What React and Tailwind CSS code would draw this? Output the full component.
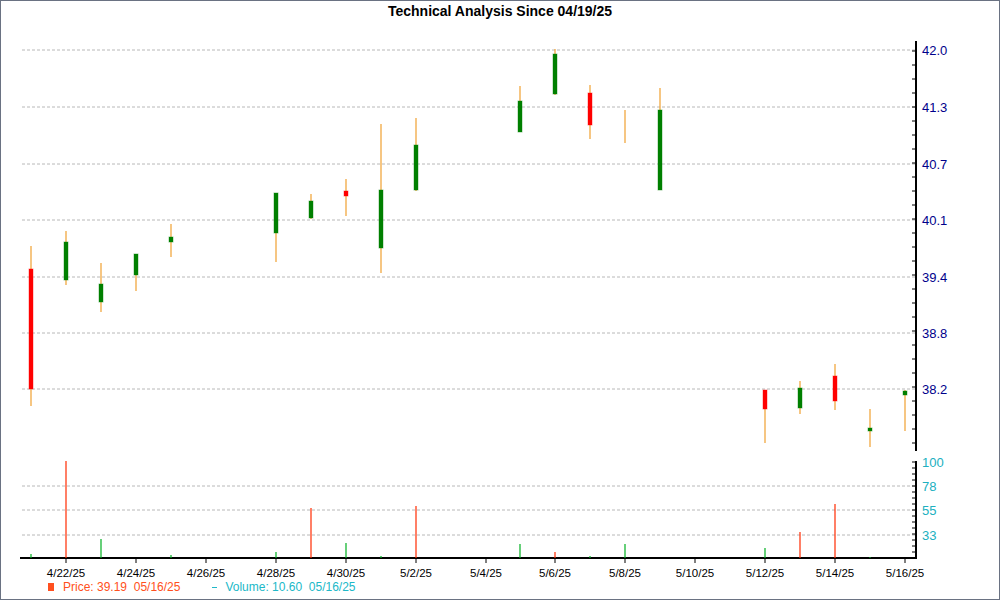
const candles = [
  [31,245,405,268,388,'r'],[66,230,284,241,279,'g'],[101,262,311,283,301,'g'],[136,253,290,253,274,'g'],
  [171,223,256,236,241,'g'],[276,192,261,192,232,'g'],[311,193,218,200,217,'g'],[346,178,215,190,195,'r'],
  [381,123,272,189,247,'g'],[416,117,190,144,189,'g'],[520,85,131,100,131,'g'],[555,48,94,53,93,'g'],
  [590,84,138,92,124,'r'],[625,109,142,0,0,'n'],[660,87,189,109,189,'g'],[765,389,442,389,408,'r'],
  [800,380,413,387,407,'g'],[835,363,409,375,400,'r'],[870,408,446,427,430,'g'],[905,389,430,390,394,'g'],
];
const vols = [[31,553,'g'],[66,460,'r'],[101,538,'g'],[171,554,'g'],[276,551,'g'],[311,507,'r'],[346,542,'g'],[381,555,'g'],[416,505,'r'],[520,543,'g'],[555,551,'r'],[590,555,'g'],[625,543,'g'],[765,547,'g'],[800,531,'r'],[835,503,'r'],[870,556,'g']];
const priceGrid = [[49,'42.0'],[106,'41.3'],[163,'40.7'],[219,'40.1'],[276,'39.4'],[332,'38.8'],[388,'38.2']];
const volGrid = [[461,'100'],[485,'78'],[509,'55'],[534,'33']];
const dates = [[66,'4/22/25'],[136,'4/24/25'],[206,'4/26/25'],[276,'4/28/25'],[346,'4/30/25'],[416,'5/2/25'],[486,'5/4/25'],[555,'5/6/25'],[625,'5/8/25'],[695,'5/10/25'],[765,'5/12/25'],[835,'5/14/25'],[905,'5/16/25']];
const C = { r: '#ff0000', g: '#008000' };
const VC = { r: '#ff2a00', g: '#00b020' };

export default function App() {
  const ticks = [];
  for (let y = 50; y < 452; y += 14) ticks.push(y);
  const vticks = [];
  for (let y = 461; y < 558; y += 6) vticks.push(y);
  return (
    <div className="w-[1000px] h-[600px] border border-gray-500 bg-white flex flex-col overflow-hidden" style={{ fontFamily: 'Arial, "Liberation Sans", sans-serif' }}>
      <div className="h-[21px] text-center text-[14px] font-bold text-black leading-[21px]">Technical Analysis Since 04/19/25</div>
      <svg width="998" height="557" viewBox="1 21 998 557" style={{ fontFamily: '"Liberation Sans", Arial, sans-serif' }}>
        {priceGrid.map(([y]) => <line key={y} x1="22" x2="916" y1={y} y2={y} stroke="#b8b8b8" strokeDasharray="3 2" />)}
        {volGrid.slice(1).map(([y]) => <line key={y} x1="22" x2="916" y1={y} y2={y} stroke="#b8b8b8" strokeDasharray="3 2" />)}
        <line x1="916" x2="916" y1="40" y2="450" stroke="#000" strokeWidth="2" />
        {ticks.map(y => <line key={y} x1="912" x2="916" y1={y} y2={y} stroke="#000" />)}
        <line x1="916" x2="916" y1="460" y2="558" stroke="#000" strokeWidth="2" />
        {vticks.map(y => <line key={y} x1="912" x2="916" y1={y} y2={y} stroke="#000" />)}
        <line x1="20" x2="916" y1="557" y2="557" stroke="#000" strokeWidth="2" />
        {dates.map(([x]) => <line key={x} x1={x} x2={x} y1="557" y2="562" stroke="#000" />)}
        {priceGrid.map(([y, t]) => <text key={t} x="922" y={y + 5} fontSize="13" fill="#00008b">{t}</text>)}
        {volGrid.map(([y, t]) => <text key={t} x="922" y={y + 5} fontSize="13" fill="#20b0c0">{t}</text>)}
        {dates.map(([x, t]) => <text key={t} x={x} y="576" fontSize="11.5" textAnchor="middle" fill="#000">{t}</text>)}
        {vols.map(([x, y, c]) => <line key={x} x1={x} x2={x} y1={y} y2="557" stroke={VC[c]} strokeWidth="1.2" />)}
        {candles.map(([x, h, l, bt, bb, c]) => (
          <g key={x}>
            <line x1={x} x2={x} y1={h} y2={l} stroke="#f0a030" strokeWidth="1.2" />
            {c !== 'n' && <rect x={x - 2} y={bt} width="4" height={Math.max(bb - bt, 3)} fill={C[c]} stroke={C[c]} strokeOpacity="0.4" />}
          </g>
        ))}
      </svg>
      <div className="flex items-center gap-[32px] pl-[47px] text-[12px] leading-[14px] mt-[1px]">
        <span className="flex items-center gap-[9px] text-[#ff5020]"><span className="w-[6px] h-[8px] bg-[#ff5020] inline-block" />Price: 39.19&nbsp; 05/16/25</span>
        <span className="flex items-center gap-[8px] text-[#20b8c8]"><span className="w-[5px] h-[1px] bg-[#20b8c8] inline-block" />Volume: 10.60&nbsp; 05/16/25</span>
      </div>
    </div>
  );
}
